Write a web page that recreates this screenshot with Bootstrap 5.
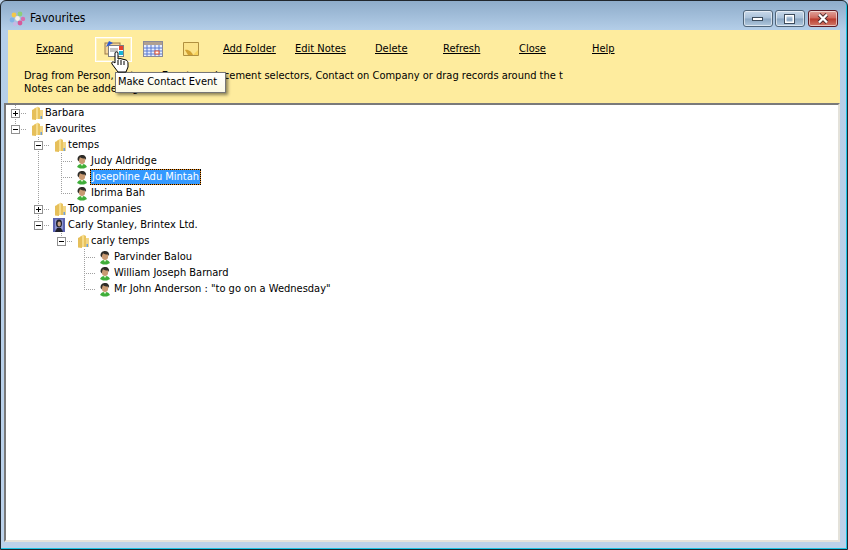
<!DOCTYPE html>
<html lang="en">
<head>
  <meta charset="UTF-8">
  <title>Favourites</title>
  <link href="https://cdn.jsdelivr.net/npm/bootstrap@5.3.0/dist/css/bootstrap.min.css" rel="stylesheet">
  <style>
    html, body { height: 100%; }
    body {
      font-family: "DejaVu Sans Condensed", "DejaVu Sans", sans-serif;
      font-size: 11px;
      line-height: 16px;
      color: #000;
      background: #bcd2ea;
      overflow: hidden;
    }
    .app-window {
      width: 848px;
      height: 550px;
      border: 1px solid #20262c;
      border-radius: 6px 6px 0 0;
      box-shadow: inset -1px -1px 0 #1cc4e4;
      background: linear-gradient(to bottom, #8eacca 0, #b5cfe9 30px, #bcd2ea 100%);
    }
    .title-bar { height: 29px; padding: 9px 9px 0 8px; }
    .title-text { font-size: 12px; margin-left: 4px; }
    .win-btn {
      height: 17px;
      width: 30px;
      border: 1px solid #4f6478;
      border-radius: 3px;
      background: linear-gradient(to bottom, #c9d9ea 0, #a9c1d9 48%, #8aa6c2 52%, #b2c9de 100%);
      box-shadow: inset 0 0 0 1px rgba(255,255,255,.55);
    }
    .win-gap { margin-left: 2px; }
    .win-close {
      margin-left: 3px;
      border-color: #5e1a24;
      background: linear-gradient(to bottom, #e0a49c 0, #d0685c 48%, #b93a2c 52%, #d27a6a 100%);
    }
    .tool-panel {
      margin: 0 7px;
      height: 73px;
      background: #feec9e;
      position: relative;
    }
    .tool-row { height: 37px; padding-left: 28px; padding-top: 1px; }
    .tool-link { color: #000; text-decoration: underline; white-space: nowrap; display: block; }
    .slot-expand { width: 59px; }
    .slot-folder { width: 72px; }
    .slot-notes { width: 80px; }
    .slot-delete { width: 68px; }
    .slot-refresh { width: 76px; }
    .slot-close { width: 73px; }
    .tool-icon { width: 37px; height: 25px; }
    .tool-icon-active { border: 1px solid #fff; box-shadow: inset 0 0 0 1px rgba(255,255,255,.35); }
    .ico-cal { margin-left: 11px; }
    .ico-note { margin-left: 20px; margin-right: 24px; }
    .hint-text { padding-left: 16px; margin-top: 2px; line-height: 13px; white-space: nowrap; }
    .tip-box {
      position: absolute;
      left: 107px;
      top: 42px;
      width: 111px;
      height: 21px;
      padding: 1px 2px;
      background: linear-gradient(to bottom, #fff, #fbf9e4);
      border: 1px solid #767676;
      box-shadow: 2px 2px 3px rgba(0,0,0,.45);
      white-space: nowrap;
    }
    .hand-cursor { position: absolute; left: 103px; top: 21px; }
    .tree-panel {
      margin: 0 7px 0 3px;
      height: 439px;
      background: #fff;
      border-top: 2px solid #7a7a7a;
      border-left: 2px solid #7a7a7a;
      border-right: 2px solid #e4e2da;
      border-bottom: 2px solid #e4e2da;
    }
    .tree-row { display: flex; height: 16px; align-items: center; margin-left: -2px; white-space: nowrap; }
    .tree-cell { width: 23px; height: 16px; flex: none; display: flex; align-items: center; padding-left: 7px; background-repeat: no-repeat; }
    .line-v { background-image: repeating-linear-gradient(to bottom, #a0a0a0 0 1px, transparent 1px 2px); background-size: 1px 16px; background-position: 11px 0; }
    .line-t {
      background-image: repeating-linear-gradient(to bottom, #a0a0a0 0 1px, transparent 1px 2px), repeating-linear-gradient(to right, #a0a0a0 0 1px, transparent 1px 2px);
      background-size: 1px 16px, 12px 1px;
      background-position: 11px 0, 11px 8px;
    }
    .line-l {
      background-image: repeating-linear-gradient(to bottom, #a0a0a0 0 1px, transparent 1px 2px), repeating-linear-gradient(to right, #a0a0a0 0 1px, transparent 1px 2px);
      background-size: 1px 9px, 12px 1px;
      background-position: 11px 0, 11px 8px;
    }
    .tree-exp { width: 9px; height: 9px; border: 1px solid #919191; background: #fff; position: relative; }
    .tree-exp::before { content: ""; position: absolute; left: 1px; top: 3px; width: 5px; height: 1px; background: #000; }
    .exp-plus::after { content: ""; position: absolute; left: 3px; top: 1px; width: 1px; height: 5px; background: #000; }
    .tree-icon { width: 16px; height: 16px; flex: none; margin-left: 1px; }
    .tree-label { padding-left: 1px; }
    .tree-picked {
      background: #3399ff;
      color: #fff;
      outline: 1px dotted #000;
      outline-offset: -1px;
      border: 1px solid #e8891a;
      height: 16px;
      line-height: 14px;
      padding: 0 1px;
      margin-left: 0;
    }
  </style>
</head>
<body>
  <svg width="0" height="0" class="d-block">
    <defs>
      <symbol id="ico-folder" viewBox="0 0 16 16">
        <path d="M6 3.5 L10 1.5 V14 H6 Z" fill="#f6dc8c"/>
        <path d="M10 2 L12 3 V14 H10 Z" fill="#e9c45e"/>
        <path d="M4 5 L8 3 V15 L4 14.5 Z" fill="#e6bf5a"/>
        <path d="M12 5 H15 V14 H12 Z" fill="#f2d686"/>
        <path d="M12.5 11 h1.5 v3 h-1.5 Z" fill="#6f9fd8"/>
      </symbol>
      <symbol id="ico-person" viewBox="0 0 16 16">
        <path d="M3 14 C4 11.5 6 11 8 11 C10 11 12 11.5 13 14 L10 15.5 H6 Z" fill="#3fae3a"/>
        <path d="M6.5 11 L8 13 L9.5 11 Z" fill="#dff5d0"/>
        <ellipse cx="8" cy="7" rx="3.2" ry="4" fill="#c99a72"/>
        <path d="M3.6 7 C3.2 3 6 2 8 2 C11 2 12.6 4 12 7 L11 5.6 C9 5.6 7 5 6 4.2 C5.6 5.4 5 6 4.8 8.4 Z" fill="#2e2c28"/>
      </symbol>
      <symbol id="ico-contact" viewBox="0 0 16 16">
        <rect x="2" y="1" width="12" height="14" fill="#5a62b0"/>
        <rect x="4" y="2.5" width="8" height="10" fill="#8d94cf"/>
        <ellipse cx="8" cy="6.5" rx="3" ry="4" fill="#22222c"/>
        <ellipse cx="8.2" cy="7" rx="1.7" ry="2.4" fill="#c8a48a"/>
        <path d="M4 15 L6 11 H10 L12 15 Z" fill="#20202a"/>
      </symbol>
    </defs>
  </svg>

  <div class="app-window">
    <div class="title-bar d-flex align-items-start">
      <svg width="17" height="17" viewBox="0 0 17 17">
        <circle cx="5" cy="5" r="2.4" fill="#f2c84a"/><circle cx="11" cy="4" r="2.4" fill="#8ccf7a"/>
        <circle cx="14" cy="9" r="2.2" fill="#d86fb0"/><circle cx="3" cy="10" r="2.4" fill="#7fb2e6"/>
        <circle cx="11" cy="13" r="2.4" fill="#d65a9a"/><circle cx="6" cy="14" r="2" fill="#c9b6e4"/>
        <circle cx="8.5" cy="8.5" r="2.4" fill="#f4f0e8"/>
      </svg>
      <span class="title-text">Favourites</span>
      <div class="ms-auto d-flex">
        <div class="win-btn d-flex align-items-center justify-content-center"><svg width="12" height="6"><rect x=".5" y="1.5" width="10" height="3" fill="#fff" stroke="#3d4c5c"/></svg></div>
        <div class="win-btn win-gap d-flex align-items-center justify-content-center"><svg width="12" height="10"><rect x="1.5" y="1.5" width="8" height="7" fill="none" stroke="#fff" stroke-width="2"/><rect x=".5" y=".5" width="10" height="9" fill="none" stroke="#3d4c5c"/></svg></div>
        <div class="win-btn win-close d-flex align-items-center justify-content-center"><svg width="14" height="11"><path d="M3 1.5 L11 9.5 M11 1.5 L3 9.5" stroke="#4a2a2e" stroke-width="4"/><path d="M3 1.5 L11 9.5 M11 1.5 L3 9.5" stroke="#fff" stroke-width="2.4"/></svg></div>
      </div>
    </div>

    <div class="tool-panel">
      <div class="tool-row d-flex align-items-center">
        <a class="tool-link slot-expand" href="#">Expand</a>
        <div class="tool-icon tool-icon-active d-flex align-items-center justify-content-center">
          <svg width="20" height="16" viewBox="0 0 20 16">
            <rect x="1" y="2" width="15" height="11" fill="#f4d69a" stroke="#9a7a4a"/>
            <rect x="4.5" y="4.5" width="15" height="11" fill="#fff" stroke="#7f7f7f"/>
            <rect x="15" y="5" width="4" height="4" fill="#e8402a"/>
            <rect x="15" y="10" width="4" height="4" fill="#18b4d8"/>
            <path d="M2 6 L5 0 L9 2 Z" fill="#2a5bd8"/>
            <path d="M6 8 h8 M6 10 h8" stroke="#8a8a8a"/>
          </svg>
        </div>
        <svg class="ico-cal" width="20" height="16" viewBox="0 0 20 16">
          <rect x=".5" y=".5" width="19" height="15" fill="#e8eefc" stroke="#8a8a9a"/>
          <rect x="1" y="1" width="18" height="3" fill="#b0a090"/>
          <path d="M4 4v11M8 4v11M12 4v11M16 4v11M1 7h18M1 10h18M1 13h18" stroke="#5a7ad0"/>
          <rect x="12" y="10" width="4" height="3" fill="#fff" stroke="#e8502a"/>
        </svg>
        <svg class="ico-note" width="16" height="16" viewBox="0 0 16 16">
          <path d="M.5 1.5 H15.5 V14.5 H.5 Z" fill="#f6d25c" stroke="#b09040"/>
          <path d="M1 2 H15 V9 L10 14 H1 Z" fill="#fbe38a"/>
          <path d="M2 9 C5 8 9 11 10 14 H5 Z" fill="#d2a232"/>
        </svg>
        <a class="tool-link slot-folder" href="#">Add Folder</a>
        <a class="tool-link slot-notes" href="#">Edit Notes</a>
        <a class="tool-link slot-delete" href="#">Delete</a>
        <a class="tool-link slot-refresh" href="#">Refresh</a>
        <a class="tool-link slot-close" href="#">Close</a>
        <a class="tool-link" href="#">Help</a>
      </div>
      <div class="hint-text">Drag from Person, Notes or Event on placement selectors, Contact on Company or drag records around the t<br>Notes can be added against items</div>
      <div class="tip-box">Make Contact Event</div>
      <svg class="hand-cursor" width="18" height="22" viewBox="0 0 18 22">
        <path d="M4 2 C4 .5 7 .5 7 2 V8 L9 7.5 L11 8 L13 8.5 L15 9 C16.5 9.5 17 11 17 13 V16 L15 21 H7 L1 13 C0 11 2 10 4 12 Z" fill="#fff" stroke="#000"/>
        <path d="M7 9v5M10 9v5M13 10v4" stroke="#000"/>
      </svg>
    </div>

    <div class="tree-panel">
      <div class="tree-row"><div class="tree-cell line-t"><span class="tree-exp exp-plus"></span></div><svg class="tree-icon"><use href="#ico-folder"/></svg><span class="tree-label">Barbara</span></div>
      <div class="tree-row"><div class="tree-cell line-l"><span class="tree-exp"></span></div><svg class="tree-icon"><use href="#ico-folder"/></svg><span class="tree-label">Favourites</span></div>
      <div class="tree-row"><div class="tree-cell"></div><div class="tree-cell line-t"><span class="tree-exp"></span></div><svg class="tree-icon"><use href="#ico-folder"/></svg><span class="tree-label">temps</span></div>
      <div class="tree-row"><div class="tree-cell"></div><div class="tree-cell line-v"></div><div class="tree-cell line-t"></div><svg class="tree-icon"><use href="#ico-person"/></svg><span class="tree-label">Judy Aldridge</span></div>
      <div class="tree-row"><div class="tree-cell"></div><div class="tree-cell line-v"></div><div class="tree-cell line-t"></div><svg class="tree-icon"><use href="#ico-person"/></svg><span class="tree-label tree-picked">Josephine Adu Mintah</span></div>
      <div class="tree-row"><div class="tree-cell"></div><div class="tree-cell line-v"></div><div class="tree-cell line-l"></div><svg class="tree-icon"><use href="#ico-person"/></svg><span class="tree-label">Ibrima Bah</span></div>
      <div class="tree-row"><div class="tree-cell"></div><div class="tree-cell line-t"><span class="tree-exp exp-plus"></span></div><svg class="tree-icon"><use href="#ico-folder"/></svg><span class="tree-label">Top companies</span></div>
      <div class="tree-row"><div class="tree-cell"></div><div class="tree-cell line-l"><span class="tree-exp"></span></div><svg class="tree-icon"><use href="#ico-contact"/></svg><span class="tree-label">Carly Stanley, Brintex Ltd.</span></div>
      <div class="tree-row"><div class="tree-cell"></div><div class="tree-cell"></div><div class="tree-cell line-l"><span class="tree-exp"></span></div><svg class="tree-icon"><use href="#ico-folder"/></svg><span class="tree-label">carly temps</span></div>
      <div class="tree-row"><div class="tree-cell"></div><div class="tree-cell"></div><div class="tree-cell"></div><div class="tree-cell line-t"></div><svg class="tree-icon"><use href="#ico-person"/></svg><span class="tree-label">Parvinder Balou</span></div>
      <div class="tree-row"><div class="tree-cell"></div><div class="tree-cell"></div><div class="tree-cell"></div><div class="tree-cell line-t"></div><svg class="tree-icon"><use href="#ico-person"/></svg><span class="tree-label">William Joseph Barnard</span></div>
      <div class="tree-row"><div class="tree-cell"></div><div class="tree-cell"></div><div class="tree-cell"></div><div class="tree-cell line-l"></div><svg class="tree-icon"><use href="#ico-person"/></svg><span class="tree-label">Mr John Anderson : "to go on a Wednesday"</span></div>
    </div>
  </div>

  <script src="https://cdn.jsdelivr.net/npm/bootstrap@5.3.0/dist/js/bootstrap.bundle.min.js"></script>
</body>
</html>
